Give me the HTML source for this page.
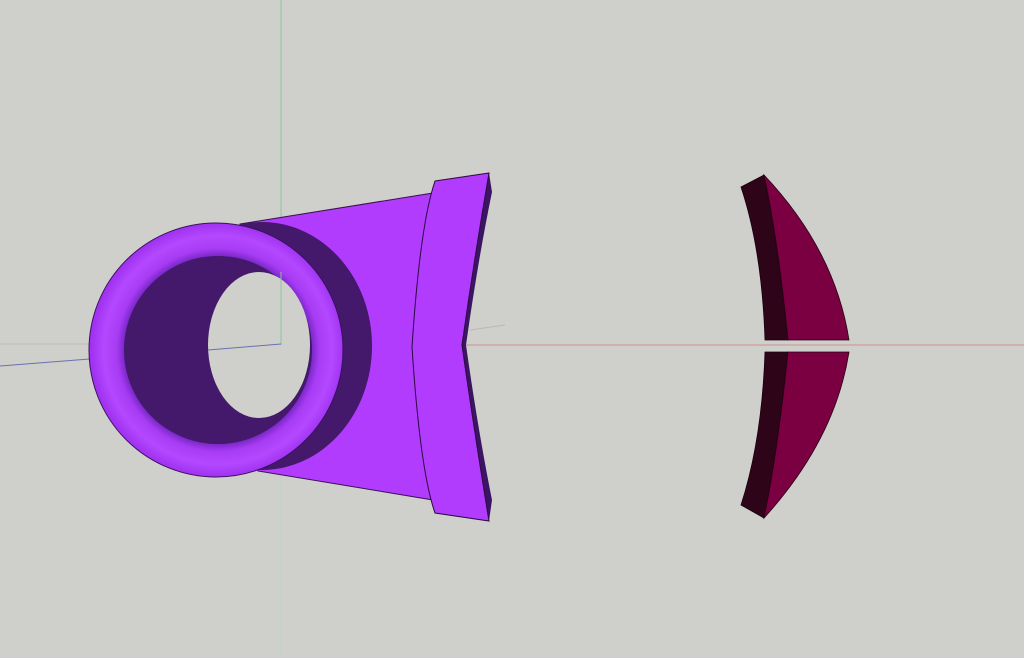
<!DOCTYPE html>
<html><head><meta charset="utf-8"><style>
html,body{margin:0;padding:0;background:#cfd0cb;}
svg{display:block}
</style></head><body>
<svg width="1024" height="658" viewBox="0 0 1024 658" xmlns="http://www.w3.org/2000/svg">
<defs>
<radialGradient id="ring" cx="218" cy="350" r="127" gradientUnits="userSpaceOnUse">
<stop offset="0.74" stop-color="#7a28c8"/>
<stop offset="0.8" stop-color="#a83cf4"/>
<stop offset="0.9" stop-color="#b448ff"/>
<stop offset="1" stop-color="#a032f0"/>
</radialGradient>
</defs>
<rect width="1024" height="658" fill="#cfd0cb"/>
<!-- axes -->
<line x1="281" y1="0" x2="281" y2="345" stroke="#8fc49a" stroke-width="1"/>
<line x1="281" y1="345" x2="281" y2="658" stroke="#c2d2c4" stroke-width="1"/>
<line x1="0" y1="344" x2="281" y2="344" stroke="#bdbdbd" stroke-width="1"/>
<line x1="0" y1="366" x2="281" y2="344" stroke="#6a70b0" stroke-width="1"/>
<line x1="281" y1="345" x2="1024" y2="345" stroke="#d09090" stroke-width="1"/>
<line x1="470" y1="330" x2="505" y2="325" stroke="#b8b8b8" stroke-width="1"/>
<!-- fan body -->
<polygon points="240,224 433,193 433,500 258,471" fill="#b13cfd" stroke="#3a1050" stroke-width="1"/>
<!-- flange dark side -->
<path d="M489,173 L492,192 Q478,260 466,345 Q478,430 492,500 L489,521 Q474,430 462,345 Q474,260 489,173Z" fill="#3c1464"/>
<!-- flange front -->
<path d="M435,181 L489,173 Q474,260 462,345 Q474,430 489,521 L435,513 Q420,470 412,347 Q420,225 435,181Z" fill="#b13cfd" stroke="#2a0a40" stroke-width="1"/>
<!-- tube dark -->
<ellipse cx="262" cy="346" rx="110" ry="124" fill="#44186a"/>
<!-- ring -->
<circle cx="216" cy="350" r="127" fill="url(#ring)" stroke="#3a1060" stroke-width="1"/>
<circle cx="218" cy="350" r="94" fill="#44186a"/>
<!-- hole -->
<ellipse cx="259" cy="345" rx="51" ry="73" fill="#cfd0cb"/>
<line x1="281" y1="272" x2="281" y2="345" stroke="#8fc49a" stroke-width="1"/>
<line x1="208" y1="350" x2="281" y2="344" stroke="#6a70b0" stroke-width="1"/>
<!-- red piece upper -->
<path d="M741,187 L764,175 Q776,230 788,340 L765,340 Q762,250 741,187Z" fill="#2e0518" stroke="#1a0010" stroke-width="0.8"/>
<path d="M764,175 Q835,250 849,340 L788,340 Q778,240 764,175Z" fill="#7a0042" stroke="#2a0015" stroke-width="0.8"/>
<!-- red piece lower -->
<path d="M741,505 L764,518 Q776,460 788,352 L765,352 Q762,440 741,505Z" fill="#2e0518" stroke="#1a0010" stroke-width="0.8"/>
<path d="M764,518 Q835,440 849,352 L788,352 Q778,450 764,518Z" fill="#7a0042" stroke="#2a0015" stroke-width="0.8"/>
</svg>
</body></html>
